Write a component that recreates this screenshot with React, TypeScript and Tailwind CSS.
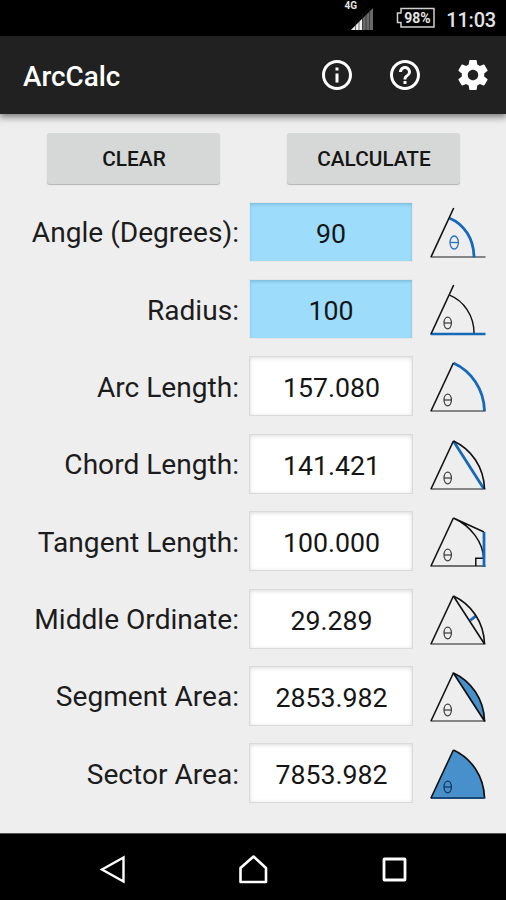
import type { ReactNode } from 'react';

const BLUE = '#1569b8';
const FILL = '#4790cb';
const INK = '#111111';

interface DiagramProps {
    children: ReactNode;
    bigTheta?: boolean;
    thetaColor?: string;
    baseColor?: string;
    baseWidth?: number;
    extended?: boolean;
}

// Shared wedge: one slanted side, the base line and the theta in the corner.
function Diagram({
    children,
    bigTheta = false,
    thetaColor = '#444444',
    baseColor = '#858585',
    baseWidth = 2,
    extended = false,
}: DiagramProps) {
    return (
        <svg width="58" height="54" viewBox="0 0 58 54" fill="none">
            <path
                d="M1.5 51H56.5"
                stroke={baseColor}
                strokeWidth={baseWidth}
            />
            {children}
            <path
                d={extended ? 'M2 51L24.7 2' : 'M2 51L24.4 3'}
                stroke={INK}
                strokeWidth="1.6"
            />
            <g stroke={thetaColor} strokeWidth="1.3">
                <ellipse
                    cx={bigTheta ? 25.2 : 18.7}
                    cy={bigTheta ? 36.5 : 40}
                    rx={bigTheta ? 4.2 : 3.7}
                    ry={bigTheta ? 6.5 : 5.8}
                />
                <path d={bigTheta ? 'M21 36.5H29.4' : 'M15 40H22.4'} />
            </g>
        </svg>
    );
}

const ARC = 'M24.4 3C42 11 55 29 55.5 51';

const rows = [
    {
        label: 'Angle (Degrees):',
        value: '90',
        input: true,
        icon: (
            <Diagram extended bigTheta thetaColor="#2b73bd">
                <path
                    d="M20.6 12.2C35 18 45 33 45 51.5"
                    stroke={BLUE}
                    strokeWidth="2.8"
                />
            </Diagram>
        ),
    },
    {
        label: 'Radius:',
        value: '100',
        input: true,
        icon: (
            <Diagram extended baseColor={BLUE} baseWidth={2.6}>
                <path
                    d="M20.6 12.2C35 18 45 33 45 50"
                    stroke={INK}
                    strokeWidth="1.4"
                />
            </Diagram>
        ),
    },
    {
        label: 'Arc Length:',
        value: '157.080',
        icon: (
            <Diagram>
                <path d={ARC} stroke={BLUE} strokeWidth="2.8" />
            </Diagram>
        ),
    },
    {
        label: 'Chord Length:',
        value: '141.421',
        icon: (
            <Diagram>
                <path d="M24.4 3L55 51" stroke={BLUE} strokeWidth="2.8" />
                <path d={ARC} stroke={INK} strokeWidth="1.6" />
            </Diagram>
        ),
    },
    {
        label: 'Tangent Length:',
        value: '100.000',
        icon: (
            <Diagram baseColor="#444444" baseWidth={1.6}>
                <path
                    d="M24.4 3C42 11 54 27 54.7 44M24.4 3L55 17M46.8 51V43.2H55"
                    stroke={INK}
                    strokeWidth="1.5"
                />
                <path d="M55 17V52" stroke={BLUE} strokeWidth="2.8" />
            </Diagram>
        ),
    },
    {
        label: 'Middle Ordinate:',
        value: '29.289',
        icon: (
            <Diagram>
                <path d="M41.2 27.3L47 22.8" stroke={BLUE} strokeWidth="2.8" />
                <path d={ARC} stroke={INK} strokeWidth="1.6" />
                <path d="M24.4 3L55.5 51" stroke={INK} strokeWidth="1.6" />
            </Diagram>
        ),
    },
    {
        label: 'Segment Area:',
        value: '2853.982',
        icon: (
            <Diagram>
                <path
                    d={`${ARC}Z`}
                    fill={FILL}
                    stroke={INK}
                    strokeWidth="1.7"
                    strokeLinejoin="round"
                />
            </Diagram>
        ),
    },
    {
        label: 'Sector Area:',
        value: '7853.982',
        icon: (
            <Diagram thetaColor="#163a5c">
                <path d={`${ARC}H2Z`} fill={FILL} />
                <path d={ARC} stroke={INK} strokeWidth="1.7" />
                <path d="M2 51H55.5" stroke="#174a75" strokeWidth="1.8" />
            </Diagram>
        ),
    },
];

function StatusBar() {
    return (
        <div className="flex h-9 items-start justify-end bg-black pr-[10px] text-[#e4e4e4]">
            <svg className="mr-[21px]" width="32" height="32" viewBox="0 0 32 32">
                <text
                    x="2.5"
                    y="9.3"
                    fontSize="10"
                    fontWeight="700"
                    fill="#e4e4e4"
                >
                    4G
                </text>
                <path d="M9 30L31 8V30Z" fill="#6a6a6a" />
                <path d="M9 30L20 19V30Z" fill="#f0f0f0" />
                <path
                    d="M13.5 20V30M17 17V30M20.5 13V30M24 10V30M27.5 8V30"
                    stroke="#222222"
                    strokeWidth="0.6"
                />
            </svg>
            <svg className="mr-[11px]" width="40" height="32" viewBox="0 0 40 32">
                <path
                    d="M6 8.5H39V27H6V22.5H2.5V13H6Z"
                    fill="none"
                    stroke="#d0d0d0"
                    strokeWidth="1.5"
                />
                <text
                    x="22.5"
                    y="22.7"
                    textAnchor="middle"
                    fontSize="14"
                    fontWeight="700"
                    fill="#e4e4e4"
                >
                    98%
                </text>
            </svg>
            <span className="pt-[6.5px] text-[20px] leading-[26px] font-medium tracking-[-0.2px]">
                11:03
            </span>
        </div>
    );
}

function AppBar() {
    return (
        <header className="relative flex h-[78px] items-center bg-[#212121] pr-[15px] pl-[23px] text-white shadow-[0_2px_7px_1px_rgba(0,0,0,0.5)]">
            <h1 className="grow pt-[3px] text-[27.8px] font-medium">ArcCalc</h1>
            <div className="flex gap-[32px]">
                <svg width="36" height="36" viewBox="0 0 24 24" fill="#fff">
                    <path d="M11 17h2v-6h-2v6zm1-15C6.48 2 2 6.48 2 12s4.48 10 10 10 10-4.48 10-10S17.52 2 12 2zm0 18c-4.41 0-8-3.59-8-8s3.59-8 8-8 8 3.59 8 8-3.59 8-8 8zM11 9h2V7h-2v2z" />
                </svg>
                <svg width="36" height="36" viewBox="0 0 24 24" fill="#fff">
                    <path d="M11 18h2v-2h-2v2zm1-16C6.48 2 2 6.48 2 12s4.48 10 10 10 10-4.48 10-10S17.52 2 12 2zm0 18c-4.41 0-8-3.59-8-8s3.59-8 8-8 8 3.59 8 8-3.59 8-8 8zm0-14c-2.21 0-4 1.79-4 4h2c0-1.1.9-2 2-2s2 .9 2 2c0 2-3 1.75-3 5h2c0-2.25 3-2.5 3-5 0-2.21-1.79-4-4-4z" />
                </svg>
                <svg width="36" height="36" viewBox="0 0 24 24" fill="#fff">
                    <path d="M19.43 12.98c.04-.32.07-.64.07-.98s-.03-.66-.07-.98l2.11-1.65c.19-.15.24-.42.12-.64l-2-3.46c-.12-.22-.39-.3-.61-.22l-2.49 1c-.52-.4-1.08-.73-1.69-.98l-.38-2.65C14.46 2.18 14.25 2 14 2h-4c-.25 0-.46.18-.49.42l-.38 2.65c-.61.25-1.17.59-1.69.98l-2.49-1c-.23-.09-.49 0-.61.22l-2 3.46c-.13.22-.07.49.12.64l2.11 1.65c-.04.32-.07.65-.07.98s.03.66.07.98l-2.11 1.65c-.19.15-.24.42-.12.64l2 3.46c.12.22.39.3.61.22l2.49-1c.52.4 1.08.73 1.69.98l.38 2.65c.03.24.24.42.49.42h4c.25 0 .46-.18.49-.42l.38-2.65c.61-.25 1.17-.59 1.69-.98l2.49 1c.23.09.49 0 .61-.22l2-3.46c.12-.22.07-.49-.12-.64l-2.11-1.65zM12 15.5c-1.93 0-3.5-1.57-3.5-3.5s1.57-3.5 3.5-3.5 3.5 1.57 3.5 3.5-1.57 3.5-3.5 3.5z" />
                </svg>
            </div>
        </header>
    );
}

function ActionButton({ children }: { children: ReactNode }) {
    return (
        <button
            type="button"
            className="h-[51px] w-[173px] rounded-[3px] bg-[#d6d8d7] pt-[2px] pl-[1px] text-[20.8px] font-medium text-[#151515] shadow-[0_1px_1px_rgba(0,0,0,0.25)]"
        >
            {children}
        </button>
    );
}

function NavBar() {
    return (
        <nav className="flex h-[67px] items-center justify-between border-t border-[#555] bg-black pt-[5px] pr-[96px] pl-[98px]">
            <svg width="30" height="32" viewBox="0 0 30 32" fill="none">
                <path d="M4 15.5L25.5 3.5V27.5Z" stroke="#fff" strokeWidth="2.4" />
            </svg>
            <svg width="32" height="32" viewBox="0 0 32 32" fill="none">
                <path
                    d="M2.5 28V14L15.5 2.5L28 14V28Z"
                    stroke="#fff"
                    strokeWidth="2.6"
                    strokeLinejoin="round"
                />
            </svg>
            <svg width="30" height="32" viewBox="0 0 30 32" fill="none">
                <rect
                    x="4"
                    y="5"
                    width="21"
                    height="21"
                    rx="0.5"
                    stroke="#fff"
                    strokeWidth="2.8"
                />
            </svg>
        </nav>
    );
}

export default function App() {
    return (
        <div className="flex h-[900px] w-[506px] flex-col overflow-hidden bg-[#eeeeee] font-[Roboto,sans-serif]">
            <StatusBar />
            <AppBar />

            <main className="grow">
                <div className="flex h-[79px] justify-between pt-[19px] pr-[46px] pl-[47px]">
                    <ActionButton>CLEAR</ActionButton>
                    <ActionButton>CALCULATE</ActionButton>
                </div>

                {rows.map((row) => (
                    <div key={row.label} className="flex h-[77.4px] items-center">
                        <label className="w-[239px] pt-[3px] text-right text-[28.1px] whitespace-nowrap text-[#1c1c1c]">
                            {row.label}
                        </label>
                        <div
                            className={
                                row.input
                                    ? 'ml-[11px] flex h-[58px] w-[162px] items-center justify-center bg-[#9edcfb] pt-[4px] text-[26.7px] text-[#151515] shadow-[inset_0_2px_3px_rgba(0,60,110,0.18),0_0_0_1px_rgba(0,0,0,0.03)]'
                                    : 'ml-[11px] flex h-[58px] w-[162px] items-center justify-center bg-white pt-[4px] pl-[1px] text-[26.7px] text-[#151515] shadow-[inset_0_1px_4px_rgba(0,0,0,0.15),0_0_0_1px_#dadada]'
                            }
                        >
                            {row.value}
                        </div>
                        <div className="ml-[17px] pt-[2px]">{row.icon}</div>
                    </div>
                ))}
            </main>

            <NavBar />
        </div>
    );
}
